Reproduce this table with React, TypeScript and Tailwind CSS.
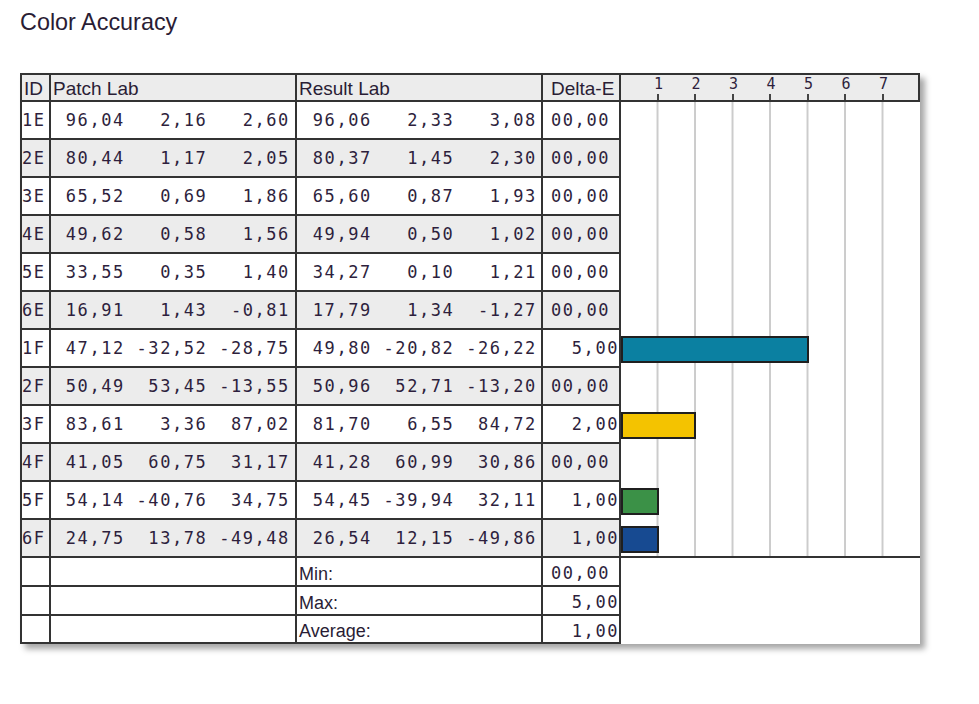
import React from "react"

type Row = {
  id: string
  patch: string[]
  result: string[]
  de: number
  bar?: string
}

const rows: Row[] = [
  { id: "1E", patch: ["96,04", "2,16", "2,60"], result: ["96,06", "2,33", "3,08"], de: 0 },
  { id: "2E", patch: ["80,44", "1,17", "2,05"], result: ["80,37", "1,45", "2,30"], de: 0 },
  { id: "3E", patch: ["65,52", "0,69", "1,86"], result: ["65,60", "0,87", "1,93"], de: 0 },
  { id: "4E", patch: ["49,62", "0,58", "1,56"], result: ["49,94", "0,50", "1,02"], de: 0 },
  { id: "5E", patch: ["33,55", "0,35", "1,40"], result: ["34,27", "0,10", "1,21"], de: 0 },
  { id: "6E", patch: ["16,91", "1,43", "-0,81"], result: ["17,79", "1,34", "-1,27"], de: 0 },
  { id: "1F", patch: ["47,12", "-32,52", "-28,75"], result: ["49,80", "-20,82", "-26,22"], de: 5, bar: "bg-[#0b80a1]" },
  { id: "2F", patch: ["50,49", "53,45", "-13,55"], result: ["50,96", "52,71", "-13,20"], de: 0 },
  { id: "3F", patch: ["83,61", "3,36", "87,02"], result: ["81,70", "6,55", "84,72"], de: 2, bar: "bg-[#f4c300]" },
  { id: "4F", patch: ["41,05", "60,75", "31,17"], result: ["41,28", "60,99", "30,86"], de: 0 },
  { id: "5F", patch: ["54,14", "-40,76", "34,75"], result: ["54,45", "-39,94", "32,11"], de: 1, bar: "bg-[#3b9147]" },
  { id: "6F", patch: ["24,75", "13,78", "-49,48"], result: ["26,54", "12,15", "-49,86"], de: 1, bar: "bg-[#174a91]" },
]

const summary = [
  { label: "Min:", value: 0 },
  { label: "Max:", value: 5 },
  { label: "Average:", value: 1 },
]

// px per delta-E unit on the chart axis
const UNIT = 37.5

const pad = (v: string[]) => v.map((s) => s.padStart(6, " ")).join(" ")
const fmt = (n: number) => (n === 0 ? "00,00" : n.toFixed(2).replace(".", ","))

const mono = "font-['DejaVu_Sans_Mono',monospace] text-[17px] tracking-[1.56px] whitespace-pre text-[#2e1f3d]"
const sans = "font-['Liberation_Sans',Arial,sans-serif] text-[#2a1d35]"
const line = "border-[#333]"
const grid =
  "bg-[linear-gradient(90deg,transparent_35.5px,#cccccc_35.5px)] bg-[length:37.5px_100%] bg-clip-content pr-[24px]"

function DeltaValue({ value }: { value: number }) {
  return value === 0 ? (
    <span className="pl-[8px]">{fmt(value)}</span>
  ) : (
    <span className="ml-auto">{fmt(value)}</span>
  )
}

function DataRow({ row, i }: { row: Row; i: number }) {
  const zebra = i % 2 === 1 ? "bg-[#ececec]" : "bg-white"
  const cell = `flex h-full items-center border-r-2 border-b-2 pt-[2px] ${line} ${zebra}`
  return (
    <div className={`flex h-[38px] ${mono}`}>
      <div className={`${cell} w-[29px]`}>{row.id}</div>
      <div className={`${cell} w-[246px] pl-[3px]`}>{pad(row.patch)}</div>
      <div className={`${cell} w-[246px] pl-[4px]`}>{pad(row.result)}</div>
      <div className={`${cell} w-[78px]`}>
        <DeltaValue value={row.de} />
      </div>
      <div className={`h-full w-[299px] bg-white ${grid} ${i === rows.length - 1 ? `border-b-2 ${line}` : ""}`}>
        {row.bar && (
          <div
            className={`mt-[6px] h-[27px] border-2 border-[#1f1f1f] ${row.bar}`}
            style={{ width: row.de * UNIT }}
          />
        )}
      </div>
    </div>
  )
}

export default function App() {
  return (
    <div className="min-h-screen bg-white pt-[8px]">
      <h1 className={`ml-[20px] text-[23.4px] leading-[28px] ${sans} text-[#1c1c1c]`}>
        Color Accuracy
      </h1>

      <div className={`ml-[20px] mt-[37px] w-[900px] border-t-2 border-l-2 ${line} bg-white shadow-[5px_5px_6px_rgba(0,0,0,0.35)]`}>
        {/* header */}
        <div className={`flex h-[27px] bg-[#ececec] text-[19px] leading-[22px] ${sans}`}>
          <div className={`w-[29px] border-r-2 border-b-2 pt-[3px] pl-[2px] ${line}`}>ID</div>
          <div className={`w-[246px] border-r-2 border-b-2 pt-[3px] pl-[2px] ${line}`}>Patch Lab</div>
          <div className={`w-[246px] border-r-2 border-b-2 pt-[3px] pl-[2px] ${line}`}>Result Lab</div>
          <div className={`w-[78px] border-r-2 border-b-2 pt-[3px] pl-[8px] ${line}`}>Delta-E</div>
          <div className={`flex w-[299px] border-r-2 border-b-2 pt-[1px] ${line}`}>
            {[1, 2, 3, 4, 5, 6, 7].map((n) => (
              <div key={n} className="flex w-[37.5px] flex-col items-end">
                <span className="translate-x-1/2 font-['DejaVu_Sans_Mono',monospace] text-[15px] leading-[16px] text-[#2e1f3d]">
                  {n}
                </span>
                <span className="mt-[2px] h-[6px] w-[2px] bg-[#444]" />
              </div>
            ))}
          </div>
        </div>

        {rows.map((row, i) => (
          <DataRow key={row.id} row={row} i={i} />
        ))}

        {summary.map((s, i) => (
          <div key={s.label} className={`flex ${i === 2 ? "h-[28px]" : "h-[29px]"}`}>
            <div className={`h-full w-[29px] border-r-2 border-b-2 ${line}`} />
            <div className={`h-full w-[246px] border-r-2 border-b-2 ${line}`} />
            <div className={`flex h-full w-[246px] items-center border-r-2 border-b-2 pt-[5px] pl-[2px] text-[18px] ${line} ${sans}`}>
              {s.label}
            </div>
            <div className={`flex h-full w-[78px] items-center border-r-2 border-b-2 pt-[5px] ${line} ${mono}`}>
              <DeltaValue value={s.value} />
            </div>
            <div className="h-full w-[299px]" />
          </div>
        ))}
      </div>
    </div>
  )
}
